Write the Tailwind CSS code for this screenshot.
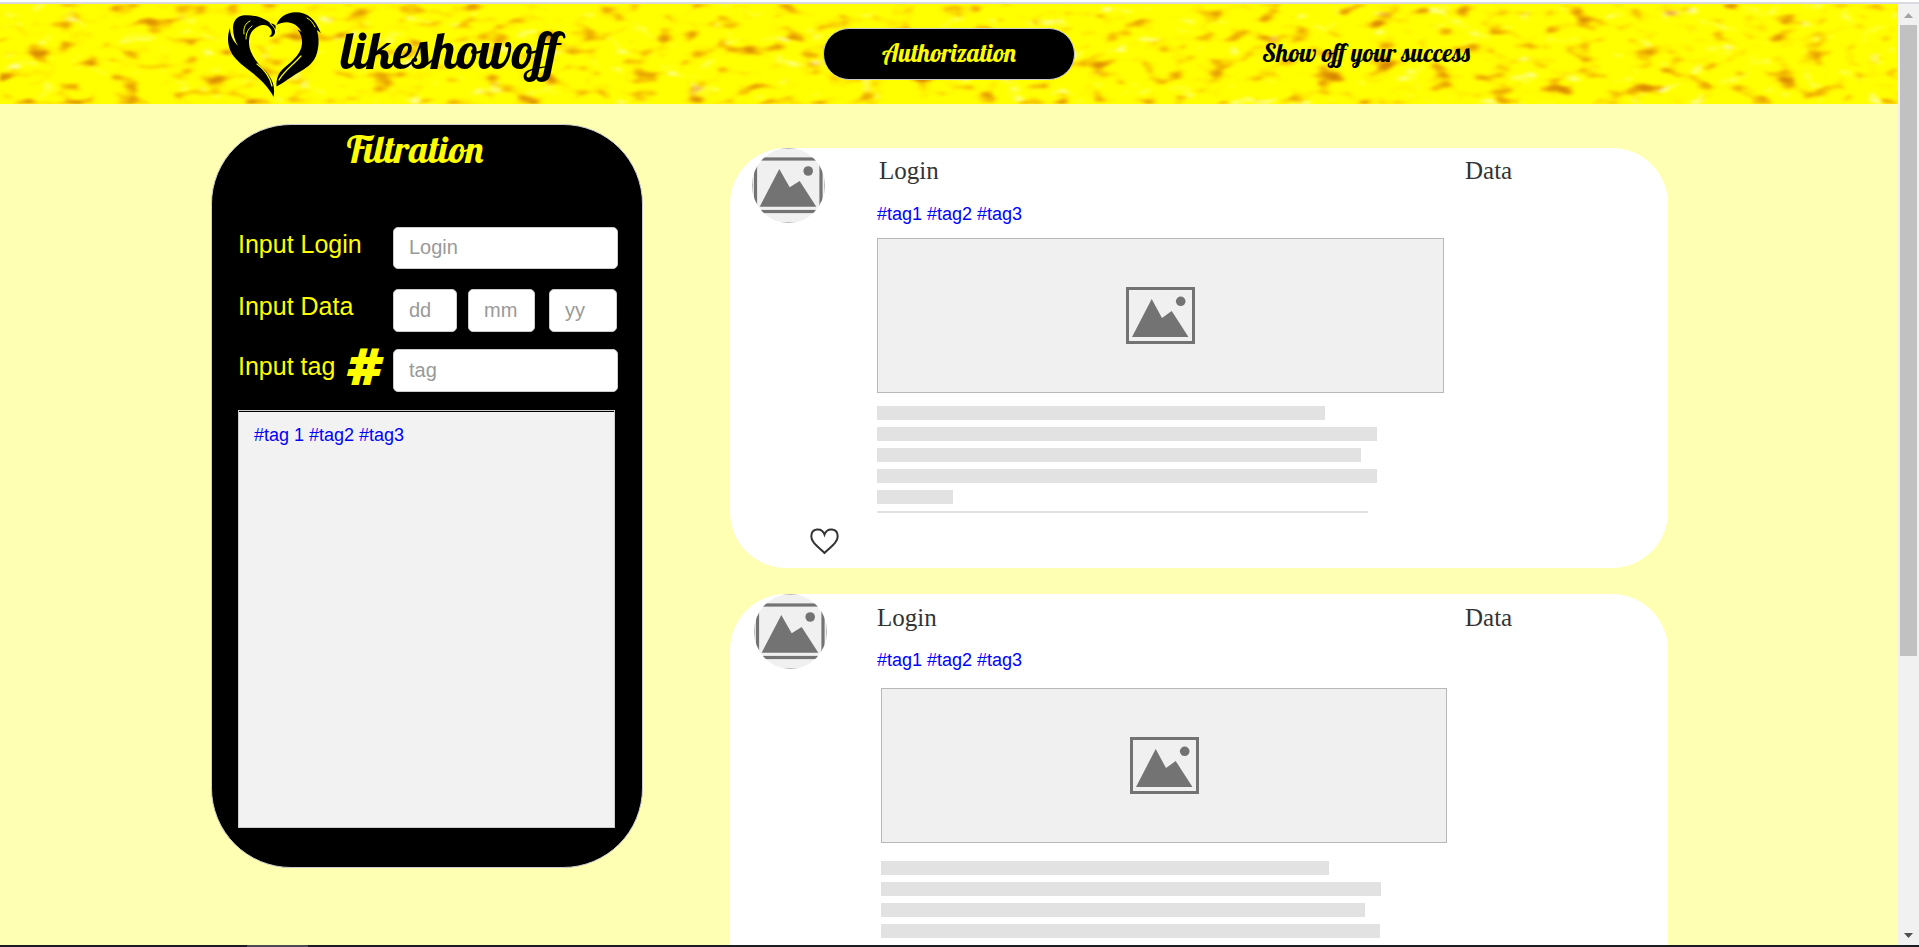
<!DOCTYPE html>
<html lang="en">
<head>
<meta charset="utf-8">
<title>likeshowoff</title>
<script src="https://cdn.jsdelivr.net/npm/@tailwindcss/browser@4"></script>
</head>
<body class="h-screen overflow-hidden bg-[#ffffb3] font-['Liberation_Sans',sans-serif] text-[#333]">
<svg width="0" height="0" class="absolute">
  <symbol id="photo" viewBox="0 0 69 57">
    <rect x="1.5" y="1.5" width="66" height="54" fill="#f0f0f0" stroke="#737373" stroke-width="3"/>
    <path d="M6 50 25.700 12 36 31l9.700-7L62.500 50z" fill="#737373"/>
    <circle cx="54.700" cy="14.300" r="4.800" fill="#737373"/>
  </symbol>
  <symbol id="avatar" viewBox="0 0 73 75">
    <clipPath id="round"><ellipse cx="36.500" cy="37.500" rx="36.500" ry="37.500"/></clipPath>
    <g clip-path="url(#round)">
      <rect x=".5" y=".5" width="72" height="74" fill="#f0f0f0" stroke="#b8b8b8"/>
      <rect x="3.500" y="11" width="65.500" height="52.500" fill="none" stroke="#737373" stroke-width="3.200"/>
      <path d="M7.700 58.700 27.300 21l10.400 18.300 10-6.300 16.600 25.700z" fill="#737373"/>
      <circle cx="56.200" cy="23" r="4.800" fill="#737373"/>
    </g>
  </symbol>
</svg>
<div class="flex h-full flex-col">
  <div class="h-1 shrink-0 border-b-2 border-[#d9d9e0] bg-white"></div>
  <div class="flex min-h-0 flex-1">
    <div class="min-w-0 flex-1 overflow-hidden">
      <header class="relative h-[100px] bg-[#ffff00]">
        <svg class="absolute inset-0 h-full w-full" aria-hidden="true">
          <filter id="grain" x="0" y="0" width="100%" height="100%" color-interpolation-filters="sRGB">
            <feTurbulence type="fractalNoise" baseFrequency=".035 .075" numOctaves="2" seed="8"/>
            <feColorMatrix values="1 0 0 0 0  1 0 0 0 0  0 1 0 0 0  0 0 0 0 1"/>
            <feComponentTransfer>
              <feFuncR type="table" tableValues=".85 .85 .88 .97 1 1 1 1 1 1 1"/>
              <feFuncG type="table" tableValues=".5 .52 .6 .77 .95 1 1 1 1 1 1"/>
              <feFuncB type="table" tableValues="0 0 0 0 0 0 0 .15 .5 .6 .6"/>
            </feComponentTransfer>
            <feColorMatrix values="1 0 0 0 0  0 1 0 0 0  -1 1 1 0 0  0 0 0 1 0"/>
            <feGaussianBlur stdDeviation="1.3"/>
          </filter>
          <rect width="100%" height="100%" filter="url(#grain)"/>
        </svg>
        <div class="relative flex h-full items-center pl-[227px] font-['Lobster','Liberation_Serif',serif] text-black">
          <a href="#" class="flex w-[596px] items-center gap-5">
            <svg class="h-[90px] w-[94px]" viewBox="226 8 94 90" aria-hidden="true">
              <path d="M274.600 28.500C270 20 258 13.500 243 14.200 236 15 232 20 232 27c0 7 2 13 5 18-5-5-8-11-8-18-4 11-2 22 6 31 10 11 25 17 36 35l1.500 3c1.500-8 0-14-3-19-2-4-5-7-9-11-9-9-13-18-12.500-26 .5-8 4-12 9-14.500 6-3 11-1 13 3 1 2 1 4 0 5.500l-2 1.500 3 .2c4-2 4-7 .5-10.500l-3-3c2 0 4 .8 6.100 2.300z"/>
              <path d="M275.500 24C278 16 286 11 295 11.200c11 .3 19 6 24.800 20.800l-4-3c2.500 8 2.500 17-.8 26-4 10-14 14-23 20-7 4.500-13 9-16.500 10.500-.5-8 2-14 8-19 10-8 17-15 17.500-24 .3-5-1-10-4.500-14l4 2.500C296 22 286 18.500 275.500 24z"/>
              <g fill="none" stroke="#ffff00" stroke-linecap="round"><path d="M243 33c-1-7 2-11 6-13" stroke-width="1"/><path d="M245 38c0-6 2-10 6-13" stroke-width="1"/><path d="M256 63c8 6 13 13 15 22" stroke-width="1.200"/><path d="M278 79c5-9 14-15 22-24" stroke-width="1.200"/><path d="M306 17c4 2 6 5 8 9" stroke-width="1"/></g>
            </svg>
            <span class="pb-[6px] text-[50px] leading-[60px]">likeshowoff</span>
          </a>
          <button class="h-[52px] w-[252px] rounded-[26px] border border-[#ccc] bg-black pb-[2px] text-[25px] text-[#ffff00]">Authorization</button>
          <p class="ml-[187px] pb-[2px] text-[25px] leading-8">Show off your success</p>
        </div>
      </header>
      <div class="flex items-start pl-[211px]">
        <form class="mt-5 h-[744px] w-[432px] shrink-0 rounded-[80px] border border-[#ccc] bg-black px-[26px] text-[#ffff00]">
          <h2 class="h-[102px] pr-6 text-center font-['Lobster','Liberation_Serif',serif] text-[38px] leading-[48px]">Filtration</h2>
          <div class="text-[25px] leading-[34px]">
            <div class="flex h-[42px]">
              <label for="login" class="w-[155px] shrink-0">Input Login</label>
              <input id="login" placeholder="Login" class="w-[225px] shrink-0 rounded-[5px] border border-[#ccc] bg-white px-[15px] pb-[3px] text-xl text-[#555] placeholder:text-[#999]">
            </div>
            <div class="mt-5 flex h-[43px]">
              <label for="day" class="w-[155px] shrink-0">Input Data</label>
              <input id="day" placeholder="dd" class="w-16 rounded-[5px] border border-[#ccc] bg-white px-[15px] pb-px text-xl text-[#555] placeholder:text-[#999]">
              <input aria-label="Month" placeholder="mm" class="ml-[11px] w-[67px] rounded-[5px] border border-[#ccc] bg-white px-[15px] pb-px text-xl text-[#555] placeholder:text-[#999]">
              <input aria-label="Year" placeholder="yy" class="ml-[14px] w-[68px] rounded-[5px] border border-[#ccc] bg-white px-[15px] pb-px text-xl text-[#555] placeholder:text-[#999]">
            </div>
            <div class="mt-[17px] flex h-[43px]">
              <label for="tag" class="w-[107px] shrink-0">Input tag</label>
              <span class="w-12 shrink-0 font-['DejaVu_Sans',sans-serif] text-[48px] leading-[36px] font-bold italic [-webkit-text-stroke:2px_#ffff00]">#</span>
              <input id="tag" placeholder="tag" class="w-[225px] shrink-0 rounded-[5px] border border-[#ccc] bg-white px-[15px] pb-px text-xl text-[#555] placeholder:text-[#999]">
            </div>
          </div>
          <div class="mt-[18px] h-[418px] w-[377px] border border-[#ccc] bg-[#f2f2f2]">
            <div class="border-t border-black px-[15px] pt-[11px] text-lg leading-6"><a href="#" class="text-[#0000ff]">#tag 1 #tag2 #tag3</a></div>
          </div>
        </form>
        <main class="mt-11 ml-[87px] flex w-[938px] flex-col gap-[26px]">
          <article class="flex h-[420px] rounded-[56px] bg-white">
            <div class="flex w-[147px] shrink-0 flex-col pl-[22px]">
              <svg class="h-[75px] w-[73px]" role="img" aria-label="Avatar"><use href="#avatar"/></svg>
              <button aria-label="Like" class="mt-[304px] ml-14 h-7 w-8">
                <svg viewBox="0 0 32 28" class="h-7 w-8" fill="none" stroke="#333" stroke-width="2"><path d="M16.500 7.500C14 .5 3.300.5 3.300 9.500c0 5 4.700 8.500 13.200 16.500 8.500-8 13.200-11.500 13.200-16.500C29.700.5 19 .5 16.500 7.500z"/></svg>
              </button>
            </div>
            <div>
              <div class="flex pt-[7px] font-['Liberation_Serif',serif] text-[25px] leading-8"><h3 class="w-[588px] pl-[2px]">Login</h3><span>Data</span></div>
              <p class="mt-[15px] text-lg leading-6"><a href="#" class="text-[#0000ff]">#tag1 #tag2 #tag3</a></p>
              <div class="mt-3 flex h-[155px] w-[567px] items-center justify-center border border-[#b8b8b8] bg-[#f0f0f0]"><svg class="h-[57px] w-[69px]" role="img" aria-label="Picture"><use href="#photo"/></svg></div>
              <div class="mt-[13px] flex flex-col gap-[7px]">
                <div class="h-[14px] w-[448px] bg-[#e2e2e2]"></div>
                <div class="h-[14px] w-[500px] bg-[#e2e2e2]"></div>
                <div class="h-[14px] w-[484px] bg-[#e2e2e2]"></div>
                <div class="h-[14px] w-[500px] bg-[#e2e2e2]"></div>
                <div class="h-[14px] w-[76px] bg-[#e2e2e2]"></div>
                <div class="h-[2px] w-[491px] bg-[#e2e2e2]"></div>
              </div>
            </div>
          </article>
          <article class="flex h-[420px] rounded-[56px] bg-white">
            <div class="w-[147px] shrink-0 pl-6">
              <svg class="h-[75px] w-[73px]" role="img" aria-label="Avatar"><use href="#avatar"/></svg>
            </div>
            <div>
              <div class="flex pt-2 font-['Liberation_Serif',serif] text-[25px] leading-8"><h3 class="w-[588px]">Login</h3><span>Data</span></div>
              <p class="mt-[14px] text-lg leading-6"><a href="#" class="text-[#0000ff]">#tag1 #tag2 #tag3</a></p>
              <div class="mt-4 ml-1 flex h-[155px] w-[566px] items-center justify-center border border-[#b8b8b8] bg-[#f0f0f0]"><svg class="h-[57px] w-[69px]" role="img" aria-label="Picture"><use href="#photo"/></svg></div>
              <div class="mt-[18px] ml-1 flex flex-col gap-[7px]">
                <div class="h-[14px] w-[448px] bg-[#e2e2e2]"></div>
                <div class="h-[14px] w-[500px] bg-[#e2e2e2]"></div>
                <div class="h-[14px] w-[484px] bg-[#e2e2e2]"></div>
                <div class="h-[14px] w-[499px] bg-[#e2e2e2]"></div>
              </div>
            </div>
          </article>
        </main>
      </div>
    </div>
    <div class="flex w-[21px] shrink-0 flex-col items-center bg-[#f1f1f1]" aria-hidden="true">
      <svg class="h-[21px] w-[17px] shrink-0" viewBox="0 0 17 21"><path d="M4 14h9l-4.500-5z" fill="#a3a3a3"/></svg>
      <div class="h-[631px] w-[17px] bg-[#c1c1c1]"></div>
      <svg class="mt-auto h-[17px] w-[17px] shrink-0" viewBox="0 0 17 17"><path d="M4 5h9l-4.500 5z" fill="#505050"/></svg>
    </div>
  </div>
  <div class="h-[2px] shrink-0 bg-[#1b1c22]"><div class="ml-[247px] h-[2px] w-[61px] bg-[#4a4b50]"></div></div>
</div>
</body>
</html>
